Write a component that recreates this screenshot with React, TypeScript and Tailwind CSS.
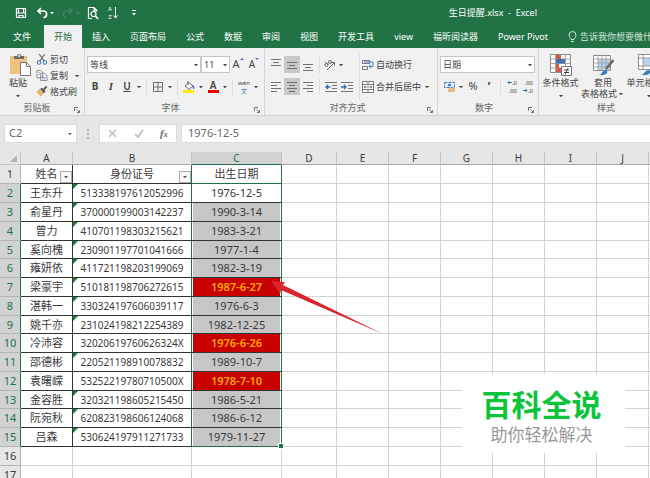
import React, { useState } from 'react';

const tabs = ['开始', '插入', '页面布局', '公式', '数据', '审阅', '视图', '开发工具', 'view', '福昕阅读器', 'Power Pivot'];

const columns = ['A', 'B', 'C', 'D', 'E', 'F', 'G', 'H', 'I', 'J', 'K'];
const emptyColumns = columns.slice(3);

const people = [
  { name: '王东升', id: '513338197612052996', birthday: '1976-12-5' },
  { name: '俞星丹', id: '370000199003142237', birthday: '1990-3-14' },
  { name: '曾力', id: '410701198303215621', birthday: '1983-3-21' },
  { name: '奚向槐', id: '230901197701041666', birthday: '1977-1-4' },
  { name: '雍妍依', id: '411721198203199069', birthday: '1982-3-19' },
  { name: '梁豪宇', id: '510181198706272615', birthday: '1987-6-27', remind: true },
  { name: '湛韩一', id: '330324197606039117', birthday: '1976-6-3' },
  { name: '姚千亦', id: '231024198212254389', birthday: '1982-12-25' },
  { name: '冷沛容', id: '32020619760626324X', birthday: '1976-6-26', remind: true },
  { name: '邵德彬', id: '220521198910078832', birthday: '1989-10-7' },
  { name: '袁曙嵘', id: '53252219780710500X', birthday: '1978-7-10', remind: true },
  { name: '金容胜', id: '320321198605215450', birthday: '1986-5-21' },
  { name: '阮宛秋', id: '620823198606124068', birthday: '1986-6-12' },
  { name: '吕森', id: '530624197911271733', birthday: '1979-11-27' },
];

const Caret = () => (
  <svg className="w-2 h-2 shrink-0" viewBox="0 0 8 8" fill="currentColor">
    <path d="M2 3h4L4 5.3z" />
  </svg>
);

const Divider = () => <span className="w-px h-4 mx-[3px] shrink-0 bg-[#dcdcdc]" />;

const Tool = ({ label, active, children }: { label: string; active?: boolean; children: React.ReactNode }) => (
  <button
    aria-label={label}
    className={`w-4 h-[17px] shrink-0 flex items-center justify-center ${active ? 'bg-[#c8c8c8]' : 'hover:bg-[#dadada]'}`}
  >
    {children}
  </button>
);

const Lines = ({ d }: { d: string }) => (
  <svg className="w-3 h-3" viewBox="0 0 12 12" fill="none" stroke="#6f6f6f" strokeWidth="1">
    <path d={d} />
  </svg>
);

const Dropdown = ({ label, value, className }: { label: string; value: string; className: string }) => (
  <span className={`grid items-center shrink-0 ${className}`}>
    <select
      aria-label={label}
      className="col-start-1 row-start-1 w-full h-[17px] pl-[2px] appearance-none bg-white border border-[#c6c6c6] text-[9px] leading-none"
    >
      <option>{value}</option>
    </select>
    <span className="col-start-1 row-start-1 justify-self-end mr-px pointer-events-none">
      <Caret />
    </span>
  </span>
);

const Group = ({
  title,
  launcher = true,
  className,
  children,
}: {
  title: string;
  launcher?: boolean;
  className: string;
  children: React.ReactNode;
}) => (
  <section className={`shrink-0 flex flex-col pt-[6px] border-r border-[#d5d5d5] ${className}`}>
    <div className="flex h-[46px]">{children}</div>
    <div className="flex items-center h-[15px] text-[#666]">
      <span className="flex-1 text-center">{title}</span>
      {launcher && (
        <button aria-label={`${title}设置`} className="w-[10px] pt-1">
          <svg className="w-[6px] h-[6px]" viewBox="0 0 6 6" fill="none" stroke="#777">
            <path d="M.5 4V.5H4M2.5 2.5l3 3M5.5 3v2.5H3" />
          </svg>
        </button>
      )}
    </div>
  </section>
);

const TitleBar = () => (
  <header className="flex items-center h-[25px] pl-[15px] text-white">
    <button aria-label="保存" className="w-3">
      <svg className="w-3 h-3" viewBox="0 0 12 12" fill="none" stroke="currentColor" strokeWidth="1.2">
        <path d="M1.5 1.5h9v9h-9zM1.5 6h9M3.5 1.5V6M8.5 1.5V6M4 10.5v-2h4v2" />
      </svg>
    </button>
    <button aria-label="撤消" className="flex items-center ml-[9px]">
      <svg className="w-3 h-3" viewBox="0 0 12 12" fill="none" stroke="currentColor" strokeWidth="1.7">
        <path d="M5 1L2 4l3 3M2 4h5c5 0 4.500 6.500.5 6.500" />
      </svg>
      <Caret />
    </button>
    <button aria-label="恢复" className="flex items-center ml-[6px] text-[#3f8560]">
      <svg className="w-3 h-3" viewBox="0 0 12 12" fill="none" stroke="currentColor" strokeWidth="1.4">
        <path d="M7 1l3 3-3 3M10 4H5C0 4 .5 10.500 4.500 10.500" />
      </svg>
      <Caret />
    </button>
    <button aria-label="打印预览" className="ml-[5px]">
      <svg className="w-[14px] h-[14px]" viewBox="0 0 14 14" fill="none" stroke="currentColor" strokeWidth="1.2">
        <path d="M5 12.500H1.500v-11H7l3 3V5M7 1.500V5h3" />
        <circle cx="6.500" cy="8" r="2.500" />
        <path d="M8.500 10l2.500 3" strokeWidth="1.800" />
      </svg>
    </button>
    <button aria-label="升序排序" className="flex items-center ml-[7px]">
      <span className="flex flex-col text-[6px] leading-[8px]">
        <span>A</span>
        <span>Z</span>
      </span>
      <svg className="w-[5px] h-3 ml-px" viewBox="0 0 5 12" fill="none" stroke="currentColor">
        <path d="M2.500 0v11M.5 8.500l2 2.500 2-2.500" />
      </svg>
    </button>
    <button aria-label="自定义快速访问工具栏" className="ml-3">
      <svg className="w-2 h-2" viewBox="0 0 8 8" fill="currentColor">
        <path d="M2 1h4v1H2zM2 4h4L4 6.500z" />
      </svg>
    </button>
    <h1 className="ml-auto mr-[113px] text-[9px] whitespace-pre">生日提醒.xlsx  -  Excel</h1>
  </header>
);

const ClipboardGroup = () => (
  <Group title="剪贴板" className="w-[85px]">
    <button className="flex flex-col items-center w-9 leading-[11px]">
      <svg className="w-[22px] h-[23px] ml-1" viewBox="0 0 22 23">
        <path fill="#eec37f" d="M1 2h17v18H1z" />
        <path fill="#6d6d6d" d="M5 2h3a2 2 0 014 0h3v3H5z" />
        <circle cx="10" cy="2" r="1" fill="#fff" />
        <path fill="#fff" stroke="#7a7a7a" d="M11.500 8.500h6l4 4v9h-10z" />
        <path fill="none" stroke="#7a7a7a" d="M17.500 8.500v4h4" />
      </svg>
      <span>粘贴</span>
      <span className="pt-1"><Caret /></span>
    </button>
    <div className="flex flex-col gap-[5px] leading-[11px]">
      <button className="flex items-center gap-[2px]">
        <svg className="w-3 h-[11px]" viewBox="0 0 12 12" fill="none">
          <path d="M3 0l5.500 8M9 0L3.500 8" stroke="#6a6a6a" strokeWidth="1.300" />
          <circle cx="2.800" cy="9.300" r="1.900" stroke="#4a7dbb" strokeWidth="1.200" />
          <circle cx="9.200" cy="9.300" r="1.900" stroke="#4a7dbb" strokeWidth="1.200" />
        </svg>
        剪切
      </button>
      <button className="flex items-center gap-[2px]">
        <svg className="w-3 h-[11px]" viewBox="0 0 12 12" fill="#fff" stroke="#777" strokeWidth=".9">
          <path d="M.5.5h4l2 2v6h-6zM4.500 3.500h4l3 3v5h-7z" />
          <path d="M2 3h2M2 5h2M6 6.500h2M6 8h4M6 9.700h4" stroke="#6c94c4" />
        </svg>
        复制
        <span className="ml-[3px]"><Caret /></span>
      </button>
      <button className="flex items-center gap-[2px]">
        <svg className="w-3 h-[11px]" viewBox="0 0 12 12">
          <path d="M1 5l3-2 4 5-3 3.500L0 7z" fill="#e8b66b" />
          <path d="M4 3l2-1 4 4-2 2z" fill="#555" />
          <path d="M8 4l3-3.500" stroke="#555" strokeWidth="2.200" />
        </svg>
        格式刷
      </button>
    </div>
  </Group>
);

const FontGroup = () => (
  <Group title="字体" className="w-[180px] pl-[2px]">
    <div className="flex flex-col gap-[5px] pt-[2px]">
      <div className="flex items-center">
        <Dropdown label="字体名称" value="等线" className="w-[114px]" />
        <Dropdown label="字号" value="11" className="w-[29px]" />
        <Tool label="增大字号">
          <span className="text-[11px]">A</span>
          <svg className="w-1 h-2 self-start" viewBox="0 0 4 8" fill="#4472c4"><path d="M0 4l2-2 2 2z" /></svg>
        </Tool>
        <Tool label="减小字号">
          <span className="text-[10px]">A</span>
          <svg className="w-1 h-2 self-start" viewBox="0 0 4 8" fill="#4472c4"><path d="M0 2h4L2 4z" /></svg>
        </Tool>
      </div>
      <div className="flex items-center">
        <Tool label="加粗"><b className="text-[10px]">B</b></Tool>
        <Tool label="倾斜"><i className="font-['Liberation_Serif',serif] text-[11px] font-bold">I</i></Tool>
        <Tool label="下划线"><u className="text-[10px] font-semibold">U</u></Tool>
        <Caret />
        <Divider />
        <Tool label="边框"><Lines d="M1.500 1.500h9v9h-9zM6 1.500v9M1.500 6h9" /></Tool>
        <Caret />
        <Divider />
        <Tool label="填充颜色">
          <svg className="w-3 h-3" viewBox="0 0 12 12">
            <path d="M2 5l4-3.500L10 5 6 8.500z" fill="#fff" stroke="#666" />
            <path d="M5 0v4" stroke="#666" />
            <path d="M10 4c2 2 1.500 4 .5 4s-1-2-.5-4" fill="#4472c4" />
            <path d="M0 9h11v3H0z" fill="#ffeb00" />
          </svg>
        </Tool>
        <Caret />
        <Tool label="字体颜色">
          <span className="flex flex-col items-center text-[10px] font-semibold leading-[9px] border-b-3 border-[#f00000] w-[11px]">A</span>
        </Tool>
        <Caret />
        <Divider />
        <Tool label="拼音指南">
          <span className="flex flex-col items-center text-[6px] leading-[8px]">
            <span>wén</span>
            <span className="text-[#3a6eb5]">文</span>
          </span>
        </Tool>
        <Caret />
      </div>
    </div>
  </Group>
);

const AlignGroup = () => (
  <Group title="对齐方式" className="w-[173px] pl-[3px]">
    <div className="flex flex-col gap-[5px] w-[91px] pt-[2px]">
      <div className="flex items-center">
        <Tool label="顶端对齐"><Lines d="M1 .5h10M3 3.500h6M1 6.500h10" /></Tool>
        <Tool label="垂直居中" active><Lines d="M1 3.500h10M3 6.500h6M1 9.500h10" /></Tool>
        <Tool label="底端对齐"><Lines d="M1 5.500h10M3 8.500h6M1 11.500h10" /></Tool>
        <Divider />
        <button aria-label="方向" className="flex items-center">
          <svg className="w-[14px] h-3" viewBox="0 0 14 12" fill="none" stroke="#666">
            <path d="M4 11l7.500-7.500M8.500 3.500h3v3" />
            <circle cx="3.500" cy="6" r="1.500" />
            <path d="M2 2.500l3 3" />
            <circle cx="7" cy="3" r="1.500" />
          </svg>
          <Caret />
        </button>
      </div>
      <div className="flex items-center">
        <Tool label="左对齐"><Lines d="M1 1.500h10M1 4.500h6M1 7.500h10M1 10.500h6" /></Tool>
        <Tool label="居中" active><Lines d="M1 1.500h10M3 4.500h6M1 7.500h10M3 10.500h6" /></Tool>
        <Tool label="右对齐"><Lines d="M1 1.500h10M5 4.500h6M1 7.500h10M5 10.500h6" /></Tool>
        <Divider />
        <Tool label="减少缩进量">
          <svg className="w-3 h-3" viewBox="0 0 12 12" fill="none" stroke="#777">
            <path d="M0 1.500h12M7 4.500h5M7 7.500h5M0 10.500h12" />
            <path d="M5.500 6H1M3 4L1 6l2 2" stroke="#3a6eb5" strokeWidth="1.400" />
          </svg>
        </Tool>
        <Tool label="增加缩进量">
          <svg className="w-3 h-3" viewBox="0 0 12 12" fill="none" stroke="#777">
            <path d="M0 1.500h12M7 4.500h5M7 7.500h5M0 10.500h12" />
            <path d="M0 6h5M3 4l2 2-2 2" stroke="#3a6eb5" strokeWidth="1.400" />
          </svg>
        </Tool>
      </div>
    </div>
    <div className="flex flex-col gap-[5px] pt-[2px] pl-[2px] border-l border-[#dcdcdc]">
      <button className="flex items-center gap-[2px] h-[17px]">
        <svg className="w-3 h-3" viewBox="0 0 12 12" fill="none" stroke="#777">
          <path d="M.5 1.500h7v3h-7zM.5 7.500h5v3h-5z" />
          <path d="M2 3h9v4.500H7M9 5.500l-2 2 2 2" stroke="#4a7dbb" />
        </svg>
        自动换行
      </button>
      <button className="flex items-center gap-[2px] h-[17px]">
        <svg className="w-3 h-3" viewBox="0 0 12 12" fill="#fff" stroke="#777">
          <path d="M.5.5h11v11H.5zM.5 3.500h11M.5 8.500h11M6 .5v3M6 8.500v3" />
          <path d="M2 6h8M3.500 5L2 6l1.500 1M8.500 5L10 6 8.500 7" stroke="#666" strokeWidth=".8" fill="none" />
        </svg>
        合并后居中
        <Caret />
      </button>
    </div>
  </Group>
);

const NumberGroup = () => (
  <Group title="数字" className="w-[101px] pl-[2px]">
    <div className="flex flex-col gap-[5px] pt-[2px]">
      <Dropdown label="数字格式" value="日期" className="w-[95px]" />
      <div className="flex items-center">
        <button aria-label="会计数字格式" className="flex items-center pl-[3px]">
          <svg className="w-[14px] h-3" viewBox="0 0 14 12">
            <path d="M1.500 1.500h10v5h-10z" fill="#e6eff9" stroke="#4a7dbb" strokeDasharray="3 1" />
            <circle cx="6.500" cy="4" r="1.500" fill="#4a7dbb" />
            <path d="M5 8l7-2v5H5z" fill="#edc58a" />
            <path d="M5 8h7M5 10h7" stroke="#d9a55a" strokeWidth=".6" />
          </svg>
          <Caret />
        </button>
        <Tool label="百分比样式"><span className="text-[11px]">%</span></Tool>
        <Tool label="千位分隔样式"><b className="text-[12px]">’</b></Tool>
        <Divider />
        <Tool label="增加小数位数">
          <span className="flex flex-col items-end text-[6px] leading-[8px]">
            <span className="flex items-center">
              <svg className="w-[5px] h-[5px]" viewBox="0 0 5 5" fill="none" stroke="#3a6eb5"><path d="M5 2.500H1M2.500 1L1 2.500 2.500 4" /></svg>
              .0
            </span>
            <span>.00</span>
          </span>
        </Tool>
        <Tool label="减少小数位数">
          <span className="flex flex-col items-end text-[6px] leading-[8px]">
            <span>.00</span>
            <span className="flex items-center">
              <svg className="w-[5px] h-[5px]" viewBox="0 0 5 5" fill="none" stroke="#3a6eb5"><path d="M0 2.500h4M2.500 1L4 2.500 2.500 4" /></svg>
              .0
            </span>
          </span>
        </Tool>
      </div>
    </div>
  </Group>
);

const StyleGroup = () => (
  <Group title="样式" launcher={false} className="w-[135px]">
    <button className="flex flex-col items-center shrink-0 w-[43px] leading-[11px]">
      <svg className="w-[22px] h-[23px]" viewBox="0 0 22 23">
        <path d="M.5.5h20v18H.5z" fill="#fff" stroke="#8a8a8a" />
        <path d="M.5 5h20M.5 9.500h20M.5 14h20M5.500.5v18M15.500.5v18" stroke="#a5a5a5" />
        <path d="M6 1h5v4H6zM6 10h3v4H6zM6 14h5v4H6z" fill="#d35b41" />
        <path d="M6 5h9v4.500H6z" fill="#4472b0" />
        <path d="M11.500 12.500h10v9h-10z" fill="#fff" stroke="#777" />
        <path d="M14 16h5M14 18.500h5M18 14l-3 6.500" stroke="#444" />
      </svg>
      <span>条件格式</span>
      <span className="pt-1"><Caret /></span>
    </button>
    <button className="flex flex-col items-center shrink-0 w-[42px] leading-[11px]">
      <svg className="w-[22px] h-[23px]" viewBox="0 0 22 23">
        <path d="M1.500 1.500h17v15h-17z" fill="#fff" stroke="#8a8a8a" />
        <path d="M6 5h12v11H6z" fill="#b9d3ec" />
        <path d="M1.500 5h17M1.500 9h17M1.500 13h17M6 1.500v15M10 1.500v15M14 1.500v15" stroke="#9b9b9b" strokeWidth=".8" />
        <path d="M21.500 6L14 15" stroke="#666" strokeWidth="2.500" />
        <path d="M7 21c3 0 3-5 7-5 3 2 1 6-7 5" fill="#3a7cc0" />
      </svg>
      <span>套用</span>
      <span className="flex items-center whitespace-nowrap">表格格式<Caret /></span>
    </button>
    <button className="flex flex-col items-center shrink-0 w-[50px] leading-[11px]">
      <svg className="w-[22px] h-[23px]" viewBox="0 0 22 23">
        <path d="M.5.5h20v15H.5z" fill="#fff" stroke="#8a8a8a" />
        <path d="M5 4h12v8H5z" fill="#b9d3ec" />
        <path d="M.5 4h20M.5 12h20M5 .5v15M17 .5v15" stroke="#9b9b9b" />
        <path d="M21 8l-7 7" stroke="#666" strokeWidth="2.500" />
        <path d="M3 21c3 0 4-5 8-5 3 2 1 6-8 5" fill="#3a7cc0" />
      </svg>
      <span>单元格样式</span>
      <span className="pt-1"><Caret /></span>
    </button>
  </Group>
);

const FormulaBar = () => (
  <div className="flex items-stretch h-9 pt-2 pb-[9px] pl-1 bg-[#e6e6e6] text-[11px] text-[#666]">
    <div className="flex items-center w-[73px] pr-[2px] bg-white border border-[#dcdcdc]">
      <input aria-label="名称框" defaultValue="C2" className="w-full min-w-0 pl-1 outline-none" />
      <Caret />
    </div>
    <svg className="w-[22px] h-full" viewBox="0 0 22 19" fill="#b5b5b5">
      <path d="M10 5h2v2h-2zM10 9h2v2h-2zM10 13h2v2h-2z" />
    </svg>
    <div className="flex items-center justify-around w-[78px] bg-white border border-[#dcdcdc]">
      <button aria-label="取消">
        <svg className="w-[9px] h-[9px]" viewBox="0 0 9 9" stroke="#b9b9b9" strokeWidth="1.300"><path d="M1 1l7 7M8 1L1 8" /></svg>
      </button>
      <button aria-label="输入">
        <svg className="w-[10px] h-[9px]" viewBox="0 0 10 9" fill="none" stroke="#b9b9b9" strokeWidth="1.600"><path d="M1 5l3 3 5-7" /></svg>
      </button>
      <button aria-label="插入函数" className="font-['Liberation_Serif',serif] italic font-bold leading-none">
        f<span className="text-[8px]">x</span>
      </button>
    </div>
    <input
      aria-label="编辑栏"
      defaultValue="1976-12-5"
      className="flex-1 min-w-0 ml-1 pl-[6px] bg-white border border-r-0 border-[#dcdcdc] outline-none"
    />
  </div>
);

const FilterButton = ({ label }: { label: string }) => (
  <button
    aria-label={label}
    className="absolute right-0 bottom-0 flex items-center justify-center w-3 h-3 bg-[#f8f8f8] border border-[#ababab] text-[#555]"
  >
    <Caret />
  </button>
);

const Sheet = () => (
  <div className="relative flex-1 min-h-0 overflow-hidden bg-white">
    <table className="w-[701px] table-fixed border-separate border-spacing-0 text-[11px] leading-3 text-center text-[#3a3a3a]">
      <colgroup>
        <col className="w-[21px]" />
        <col className="w-[52px]" />
        <col className="w-[119px]" />
        <col className="w-[90px]" />
        <col className="w-[55px]" />
        {emptyColumns.slice(1).map((column) => (
          <col key={column} className="w-[52px]" />
        ))}
      </colgroup>
      <thead>
        <tr className="h-[13px] bg-[#e6e6e6]">
          <td className="p-0 border-r border-b border-[#c4c4c4]">
            <svg className="w-[9px] h-[9px] ml-auto mr-[2px]" viewBox="0 0 9 9" fill="#b3b3b3"><path d="M8 1v7H1z" /></svg>
          </td>
          {columns.map((column) => (
            <th
              key={column}
              className={`p-0 text-[10px] font-normal border-r border-b ${
                column === 'C'
                  ? 'bg-[#d2d2d2] text-[#217346] border-r-[#c4c4c4] border-b-[#217346]'
                  : 'border-r-[#c4c4c4] border-b-[#a8a8a8]'
              }`}
            >
              {column}
            </th>
          ))}
        </tr>
      </thead>
      <tbody>
        <tr className="h-[19px]">
          <th className="p-0 font-normal bg-[#e6e6e6] border-r border-b border-[#b5b5b5]">1</th>
          <th className="relative p-0 font-normal border-r border-b border-[#333]">
            姓名
            <FilterButton label="筛选姓名" />
          </th>
          <th className="relative p-0 font-normal border-r border-b border-[#333] border-r-[#217346]">
            身份证号
            <FilterButton label="筛选身份证号" />
          </th>
          <th className="p-0 font-normal border-r border-b border-[#217346]">出生日期</th>
          {emptyColumns.map((column) => (
            <td key={column} className="p-0 border-r border-b border-[#d4d4d4]" />
          ))}
        </tr>
        {people.map((person, index) => (
          <tr key={person.id} className="h-[19px] nth-[4n+5]:h-[18px]">
            <th className="p-0 font-normal bg-[#d2d2d2] text-[#217346] border-r border-b border-r-[#217346] border-b-[#b5b5b5]">
              {index + 2}
            </th>
            <td className="p-0 border-r border-b border-[#333]">{person.name}</td>
            <td className="relative p-0 text-[10px] border-r border-b border-[#333] border-r-[#217346]">
              {/* number stored as text */}
              {!person.id.endsWith('X') && (
                <svg className="absolute left-0 top-0 w-[5px] h-[5px]" viewBox="0 0 5 5" fill="#1e7b34">
                  <path d="M0 0h5L0 5z" />
                </svg>
              )}
              {person.id}
            </td>
            <td
              className={`p-0 border-r border-b border-r-[#217346] ${
                index === people.length - 1 ? 'border-b-[#217346]' : 'border-b-[#333]'
              } ${
                person.remind
                  ? 'bg-[#c80000] text-[#ffa800] font-semibold'
                  : index === 0
                    ? 'bg-white'
                    : 'bg-[#c6c6c6]'
              } shadow-[inset_1px_0_0_white,inset_-1px_0_0_white]`}
            >
              {person.birthday}
            </td>
            {emptyColumns.map((column) => (
              <td key={column} className="p-0 border-r border-b border-[#d4d4d4]" />
            ))}
          </tr>
        ))}
        {[16, 17].map((row) => (
          <tr key={row} className="h-[19px]">
            <th className="p-0 font-normal bg-[#e6e6e6] border-r border-b border-[#b5b5b5]">{row}</th>
            {columns.map((column) => (
              <td key={column} className="p-0 border-r border-b border-[#d4d4d4]" />
            ))}
          </tr>
        ))}
      </tbody>
    </table>
    {/* selection fill handle */}
    <span className="absolute left-[279px] top-[292px] w-1 h-1 bg-[#217346] outline outline-white" />
    {/* pointer to the first reminder */}
    <svg className="absolute left-[271px] top-[128px] w-[112px] h-[54px]" viewBox="0 0 112 54" fill="#d9252e">
      <path d="M0 1l14 1-2 3 100 49L10 10l-1 4z" />
    </svg>
  </div>
);

const App: React.FC = () => {
  const [activeTab, setActiveTab] = useState<string>('开始');

  return (
    <div className="relative flex flex-col h-screen overflow-hidden bg-[#217346] font-['Noto_Sans','Noto_Sans_CJK_SC',sans-serif] text-[9px] text-[#444]">
      <TitleBar />
      <nav className="flex h-[23px] overflow-hidden whitespace-nowrap text-white">
        <button className="w-11 shrink-0">文件</button>
        {tabs.map((tab) => (
          <button
            key={tab}
            onClick={() => setActiveTab(tab)}
            className={`px-[10px] shrink-0 ${activeTab === tab ? 'bg-[#f1f1f1] text-[#217346]' : ''}`}
          >
            {tab}
          </button>
        ))}
        <button className="flex items-center gap-[3px] pl-[10px] shrink-0 text-[#d3e5da]">
          <svg className="w-[9px] h-3" viewBox="0 0 9 12" fill="none" stroke="currentColor">
            <path d="M3 8.500C3 7 1 6.500 1 4a3.500 3.500 0 017 0c0 2.500-2 3-2 4.500zM3 10.500h3" />
          </svg>
          告诉我你想要做什么
        </button>
      </nav>
      <div className="flex h-[68px] shrink-0 overflow-hidden whitespace-nowrap bg-[#f1f1f1] border-b border-[#d2d2d2]">
        <ClipboardGroup />
        <FontGroup />
        <AlignGroup />
        <NumberGroup />
        <StyleGroup />
      </div>
      <FormulaBar />
      <Sheet />
      <aside className="absolute right-[25px] bottom-[25px] flex flex-col items-center justify-center gap-[2px] w-[163px] h-[79px] pt-2 pr-1 bg-white">
        <strong className="text-[30px] leading-8 font-bold text-[#0cc43c]">百科全说</strong>
        <span className="text-[17px] leading-6 text-[#999]">助你轻松解决</span>
      </aside>
    </div>
  );
};

export default App;
